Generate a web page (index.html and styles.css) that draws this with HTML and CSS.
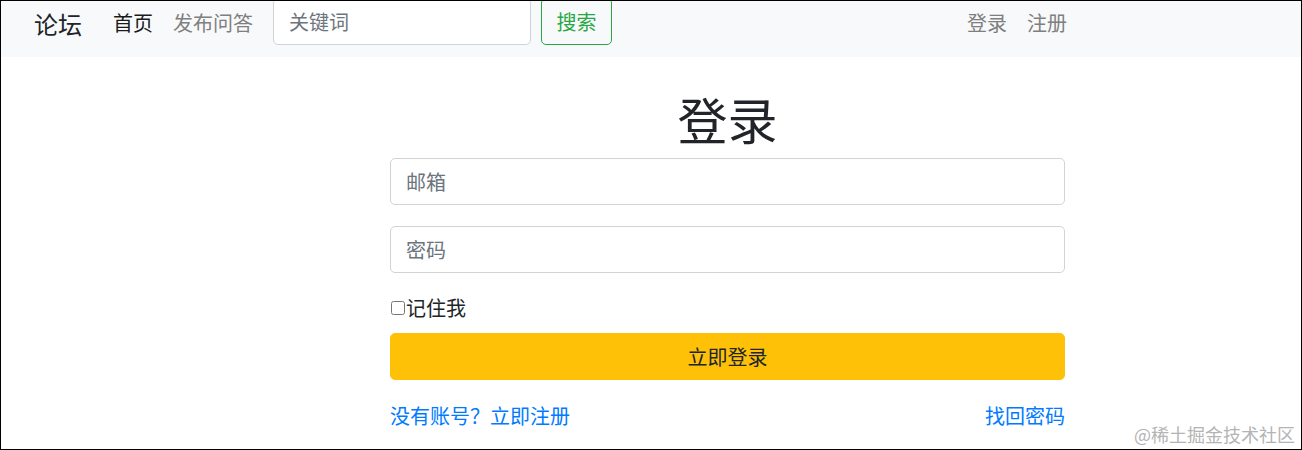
FILE: index.html
```html
<!DOCTYPE html>
<html lang="zh-CN">
<head>
<meta charset="utf-8">
<title>论坛 - 登录</title>
<link rel="stylesheet" href="styles.css">
</head>
<body>
<div class="frame">
  <nav class="navbar">
    <div class="nav-row">
      <a class="brand">论坛</a>
      <a class="nav-link active">首页</a>
      <a class="nav-link">发布问答</a>
      <input class="search-input" type="text" placeholder="关键词">
      <button class="search-btn">搜索</button>
      <div class="nav-right">
        <a class="nav-link">登录</a>
        <a class="nav-link">注册</a>
      </div>
    </div>
  </nav>
  <main class="login">
    <h1 class="title">登录</h1>
    <input class="field" type="text" placeholder="邮箱">
    <input class="field" type="password" placeholder="密码">
    <label class="remember"><input type="checkbox" class="check">记住我</label>
    <button class="submit">立即登录</button>
    <div class="links">
      <a class="link">没有账号？立即注册</a>
      <a class="link">找回密码</a>
    </div>
  </main>
  <div class="watermark">@稀土掘金技术社区</div>
</div>
</body>
</html>
```
FILE: styles.css
```css
* { box-sizing: border-box; }
html, body { margin: 0; padding: 0; background: #fff; }
body {
  font-family: "Noto Sans CJK SC", "Noto Sans", sans-serif;
  color: #212529;
}
.frame {
  position: relative;
  width: 1302px;
  height: 450px;
  border: 1px solid #000;
  overflow: hidden;
}
.navbar {
  display: flow-root;
  height: 56px;
  background: #f8f9fa;
  padding-left: 33px;
  padding-right: 224px;
}
.nav-row {
  display: flex;
  align-items: center;
  height: 47px;
  margin-top: -3px;
}
.brand {
  font-size: 24px;
  line-height: 30px;
  color: #212529;
  margin-right: 21px;
  margin-top: 4px;
}
.nav-link {
  font-size: 20px;
  line-height: 30px;
  color: #7f7f7f;
  padding: 0 10px;
  margin-top: 3px;
}
.nav-link.active { color: #1a1a1a; }
.search-input {
  width: 258px;
  height: 47px;
  margin-left: 10px;
  border: 1px solid #ced4da;
  border-radius: 5px;
  padding: 0 15px;
  font-family: inherit;
  font-size: 20px;
  color: #495057;
  background: #fff;
}
.search-input::placeholder { color: #6c757d; }
.search-btn {
  width: 71px;
  height: 47px;
  margin-left: 10px;
  border: 1px solid #28a745;
  border-radius: 5px;
  background: transparent;
  color: #28a745;
  font-family: inherit;
  font-size: 20px;
  padding: 0;
  line-height: 30px;
}
.nav-right {
  margin-left: auto;
  display: flex;
}
.login {
  width: 675px;
  margin-left: 389px;
  display: flex;
  flex-direction: column;
}
.title {
  margin: 31px 0 10px;
  text-align: center;
  font-size: 50px;
  line-height: 60px;
  font-weight: 400;
  color: #212529;
}
.field {
  height: 47px;
  border: 1px solid #ced4da;
  border-radius: 5px;
  padding: 0 15px;
  font-family: inherit;
  font-size: 20px;
  color: #495057;
  margin-bottom: 21px;
}
.field::placeholder { color: #6c757d; }
.remember {
  display: flex;
  align-items: center;
  font-size: 20px;
  line-height: 30px;
  color: #212529;
  margin-top: -1px;
}
.check {
  width: 14px;
  height: 14px;
  margin: 0 1px 0 1px;
}
.submit {
  margin-top: 10px;
  height: 47px;
  border: 1px solid #ffc107;
  border-radius: 5px;
  background: #ffc107;
  color: #212529;
  font-family: inherit;
  font-size: 20px;
  line-height: 30px;
  padding: 0;
}
.links {
  display: flex;
  justify-content: space-between;
  margin-top: 21px;
  font-size: 20px;
  line-height: 30px;
}
.link { color: #007bff; }
.watermark {
  position: absolute;
  right: 6px;
  bottom: 4px;
  font-size: 18px;
  line-height: 22px;
  color: #b4b4b4;
}
```
